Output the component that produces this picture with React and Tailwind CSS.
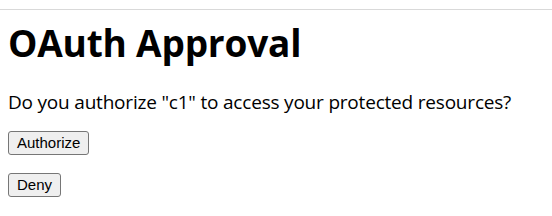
export default function App() {
  return (
    <div className="w-[552px] h-[216px] bg-white overflow-hidden">
      <div className="h-[9px]" />
      <div className="border-t border-[#d9d9d9]" />
      <div className="px-2 font-['Open_Sans',sans-serif] text-black">
        <h1 className="text-[37px] font-bold leading-[44px] mt-[11px] tracking-[-0.2px]">OAuth Approval</h1>
        <p className="text-[19px] leading-[26px] mt-[24px] tracking-[-0.2px]">Do you authorize "c1" to access your protected resources?</p>
        <div className="mt-[15px]">
          <button className="font-['Liberation_Sans',Arial,sans-serif] text-[15px] leading-[18px] px-[8px] py-[2px] bg-[#efefef] border border-[#767676] rounded-[3px] text-black">Authorize</button>
        </div>
        <div className="mt-[17px]">
          <button className="font-['Liberation_Sans',Arial,sans-serif] text-[15px] leading-[18px] px-[8px] py-[2px] bg-[#efefef] border border-[#767676] rounded-[3px] text-black">Deny</button>
        </div>
      </div>
    </div>
  );
}
